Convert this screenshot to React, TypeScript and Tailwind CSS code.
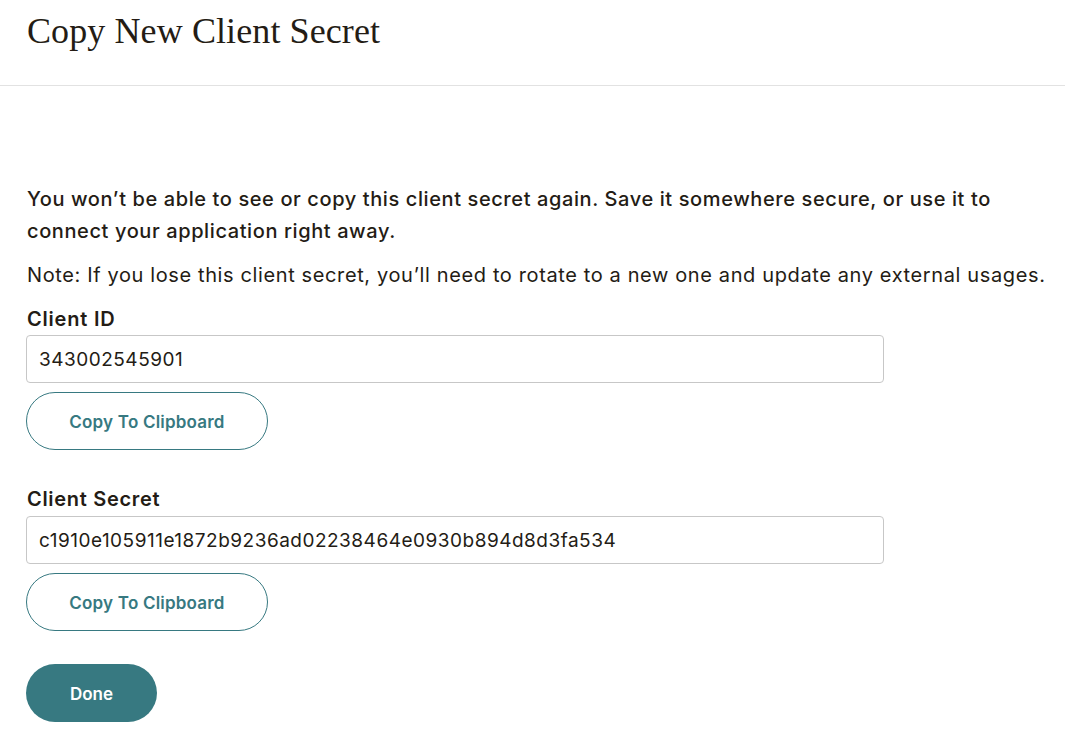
export default function App() {
  const body = { fontFamily: 'Inter, "Noto Sans", sans-serif' };
  return (
    <div className="min-h-screen bg-white text-[#241c15]" style={body}>
      <div className="h-[86px] border-b border-[#e2e2e2] px-[27px] pt-[8px]">
        <h1 className="text-[36px] leading-[46px] tracking-[0.1px] text-[#241c15]" style={{ fontFamily: '"Liberation Serif", "DejaVu Serif", serif' }}>
          Copy New Client Secret
        </h1>
      </div>

      <div className="pl-[27px] pr-[15px] pt-[97px]">
        <p className="text-[20px] font-medium leading-[32px] tracking-[0.6px]">
          You won’t be able to see or copy this client secret again. Save it somewhere secure, or use it to connect your application right away.
        </p>
        <p className="mt-[14px] text-[20px] leading-[28px] tracking-[0.62px]">
          Note: If you lose this client secret, you’ll need to rotate to a new one and update any external usages.
        </p>

        <label className="mt-[18px] block text-[20px] font-semibold leading-[24px] tracking-[0.8px]">Client ID</label>
        <input
          readOnly
          value="343002545901"
          className="mt-[4px] -ml-px block h-[48px] w-[858px] rounded-[4px] border border-[#c7c7c7] px-[12px] text-[19px] tracking-[0.5px] text-[#241c15] outline-none"
        />
        <button className="mt-[9px] -ml-px block h-[58px] w-[242px] rounded-full border border-[#377981] pt-[3px] text-[17px] font-semibold tracking-[0.2px] text-[#377981]">
          Copy To Clipboard
        </button>

        <label className="mt-[37px] block text-[20px] font-semibold leading-[24px] tracking-[0.7px]">Client Secret</label>
        <input
          readOnly
          value="c1910e105911e1872b9236ad02238464e0930b894d8d3fa534"
          className="mt-[5px] -ml-px block h-[48px] w-[858px] rounded-[4px] border border-[#c7c7c7] px-[12px] text-[19px] tracking-[0.5px] text-[#241c15] outline-none"
        />
        <button className="mt-[9px] -ml-px block h-[58px] w-[242px] rounded-full border border-[#377981] pt-[3px] text-[17px] font-semibold tracking-[0.2px] text-[#377981]">
          Copy To Clipboard
        </button>

        <button className="mt-[33px] -ml-px block h-[58px] w-[131px] rounded-full bg-[#377981] pt-[3px] text-[17px] font-semibold text-white">
          Done
        </button>
      </div>
    </div>
  );
}
